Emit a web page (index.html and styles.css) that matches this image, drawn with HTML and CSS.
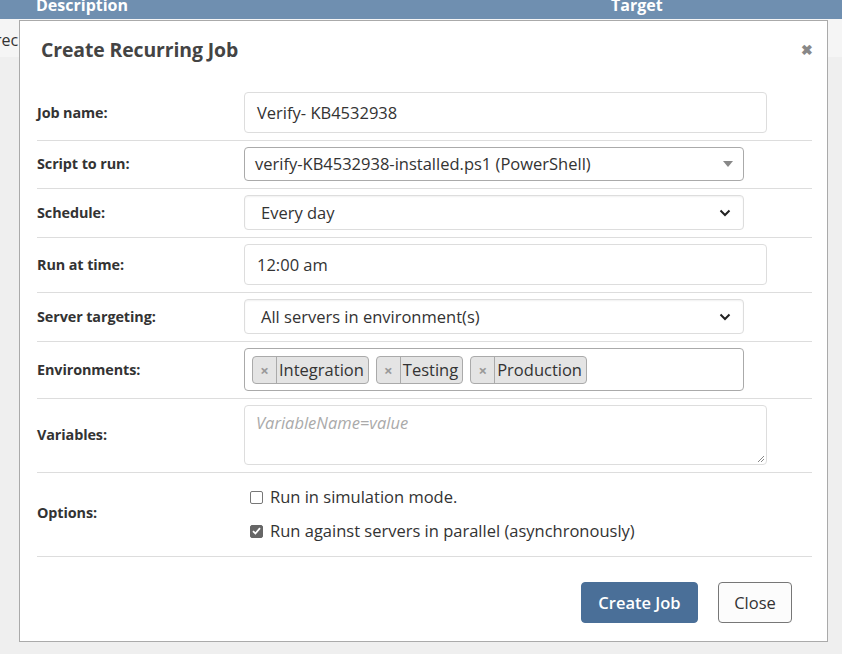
FILE: index.html
```html
<!DOCTYPE html>
<html>
<head>
<meta charset="utf-8">
<link rel="stylesheet" href="styles.css">
</head>
<body>
<div class="page">
  <div class="thead"><span class="th th-desc">Description</span><span class="th th-target">Target</span></div>
  <div class="trow"><span>rec</span></div>
</div>
<div class="modal">
  <div class="modal-header">
    <h2 class="modal-title">Create Recurring Job</h2>
    <span class="close">&#x2716;</span>
  </div>
  <div class="modal-body">
    <div class="row">
      <label class="lbl">Job name:</label>
      <div class="ctl"><div class="input wide">Verify- KB4532938</div></div>
    </div>
    <div class="row">
      <label class="lbl">Script to run:</label>
      <div class="ctl"><div class="s2 narrow"><span>verify-KB4532938-installed.ps1 (PowerShell)</span><span class="tri"></span></div></div>
    </div>
    <div class="row">
      <label class="lbl">Schedule:</label>
      <div class="ctl"><div class="select narrow"><span>Every day</span><svg class="chev" width="12" height="8" viewBox="0 0 12 8"><path d="M1.5 1.5 L6 6 L10.5 1.5" fill="none" stroke="#222" stroke-width="2"/></svg></div></div>
    </div>
    <div class="row">
      <label class="lbl">Run at time:</label>
      <div class="ctl"><div class="input wide">12:00 am</div></div>
    </div>
    <div class="row">
      <label class="lbl">Server targeting:</label>
      <div class="ctl"><div class="select narrow"><span>All servers in environment(s)</span><svg class="chev" width="12" height="8" viewBox="0 0 12 8"><path d="M1.5 1.5 L6 6 L10.5 1.5" fill="none" stroke="#222" stroke-width="2"/></svg></div></div>
    </div>
    <div class="row">
      <label class="lbl">Environments:</label>
      <div class="ctl"><div class="tags narrow">
        <span class="tag"><span class="tag-x">×</span><span class="tag-t">Integration</span></span>
        <span class="tag"><span class="tag-x">×</span><span class="tag-t">Testing</span></span>
        <span class="tag"><span class="tag-x">×</span><span class="tag-t">Production</span></span>
      </div></div>
    </div>
    <div class="row">
      <label class="lbl">Variables:</label>
      <div class="ctl"><div class="textarea wide"><span class="ph">VariableName=value</span><svg class="grip" width="10" height="10" viewBox="0 0 10 10"><path d="M9 3 L3 9 M9 6 L6 9" stroke="#888" stroke-width="1"/></svg></div></div>
    </div>
    <div class="row row-opts">
      <label class="lbl">Options:</label>
      <div class="ctl opts">
        <div class="chk"><span class="box"></span><span>Run in simulation mode.</span></div>
        <div class="chk"><span class="box on"><svg width="9" height="8" viewBox="0 0 9 8"><path d="M1 4.2 L3.4 6.5 L8 1.2" fill="none" stroke="#fff" stroke-width="1.8"/></svg></span><span>Run against servers in parallel (asynchronously)</span></div>
      </div>
    </div>
  </div>
  <div class="modal-footer">
    <button class="btn btn-primary">Create Job</button>
    <button class="btn btn-default">Close</button>
  </div>
</div>
</body>
</html>
```
FILE: styles.css
```css
* { box-sizing: border-box; }
html, body { margin: 0; padding: 0; }
body {
  width: 842px; height: 654px; overflow: hidden;
  background: #efefef;
  font-family: "Open Sans", "Noto Sans", sans-serif;
  color: #333;
  position: relative;
}
.page { width: 100%; }
.thead {
  height: 19px; background: #6f8fb0; position: relative; overflow: hidden;
}
.th {
  position: absolute; bottom: 6px; color: #fff; font-weight: 700; font-size: 16px; line-height: 16px;
}
.th-desc { left: 36px; }
.th-target { left: 611px; }
.trow {
  height: 38px; background: #f5f5f5; font-size: 16px; line-height: 16px; padding-top: 13px;
  margin-left: -5px;
}
.modal {
  position: absolute; left: 19px; top: 20px; width: 809px; height: 622px;
  background: #fff; border: 1px solid #aaa;
}
.modal-header {
  height: 64px; display: flex; align-items: flex-start; justify-content: space-between;
  padding: 16px 14px 0 21px;
}
.modal-title {
  margin: 0; font-size: 19.4px; font-weight: 700; color: #444; letter-spacing: -0.1px; line-height: 26px;
}
.close { color: #888; font-size: 14px; font-weight: 700; padding-top: 3px; }
.modal-body { padding: 0 15px 0 17px; }
.row {
  display: flex; align-items: center; border-bottom: 1px solid #ddd; padding: 6px 0 7px;
}
.row:first-child { padding-top: 7px; }
.lbl {
  width: 207px; flex: none; font-weight: 700; font-size: 14.4px; line-height: 20px; color: #333; letter-spacing: -0.1px;
}
.ctl { flex: 1; }
.input, .select, .s2, .textarea, .tags {
  font-size: 16.5px; line-height: 22px; color: #333; background: #fff;
}
.wide { width: 523px; }
.narrow { width: 500px; }
.input {
  height: 41px; border: 1px solid #ddd; border-radius: 4px; padding: 0 12px; display: flex; align-items: center;
}
.select {
  height: 35px; border: 1px solid #ddd; border-radius: 4px; padding: 0 10px 0 16px; display: flex; align-items: center; justify-content: space-between;
  box-shadow: inset 0 1px 2px rgba(0,0,0,0.06);
}
.chev { margin-right: 2px; }
.s2 {
  height: 34px; border: 1px solid #aaa; border-radius: 4px; padding: 0 10px 0 10px; display: flex; align-items: center; justify-content: space-between;
}
.tri { width: 0; height: 0; border-left: 5px solid transparent; border-right: 5px solid transparent; border-top: 6px solid #888; margin-right: 0; }
.tags {
  height: 43px; border: 1px solid #aaa; border-radius: 4px; padding: 0 7px; display: flex; align-items: center; gap: 7px;
}
.tag {
  display: flex; align-items: stretch; height: 28px; border: 1px solid #aaa; border-radius: 4px; background: #e4e4e4;
}
.tag-x {
  width: 24px; display: flex; align-items: center; justify-content: center; color: #999; font-size: 15px; font-weight: 700; border-right: 1px solid #aaa;
}
.tag-t { display: flex; align-items: center; padding: 0 4px 0 2px; font-size: 16.5px; color: #333; }
.textarea {
  height: 60px; border: 1px solid #ddd; border-radius: 4px; padding: 6px 11px; position: relative;
}
.ph { color: #aaa; font-style: italic; }
.grip { position: absolute; right: 1px; bottom: 1px; }
.row-opts { padding: 8px 0 11px; }
.opts { display: flex; flex-direction: column; gap: 12px; padding: 5px 0 3px 6px; }
.chk { display: flex; align-items: center; gap: 7px; font-size: 16.5px; line-height: 22px; color: #333; }
.box {
  width: 13px; height: 13px; border: 1px solid #777; border-radius: 2px; background: #fff; display: flex; align-items: center; justify-content: center;
}
.box.on { background: #666; border-color: #666; }
.modal-footer { display: flex; justify-content: flex-end; gap: 20px; padding: 25px 35px 0 0; }
.btn {
  height: 41px; border-radius: 4px; font-family: inherit; font-size: 16.5px; padding: 0 14px; cursor: pointer;
}
.btn-primary { background: #4a6f98; border: 1px solid #4a6f98; color: #fff; font-weight: 600; width: 117px; }
.btn-default { background: #fcfcfc; border: 1px solid #777; color: #333; width: 74px; }
```
